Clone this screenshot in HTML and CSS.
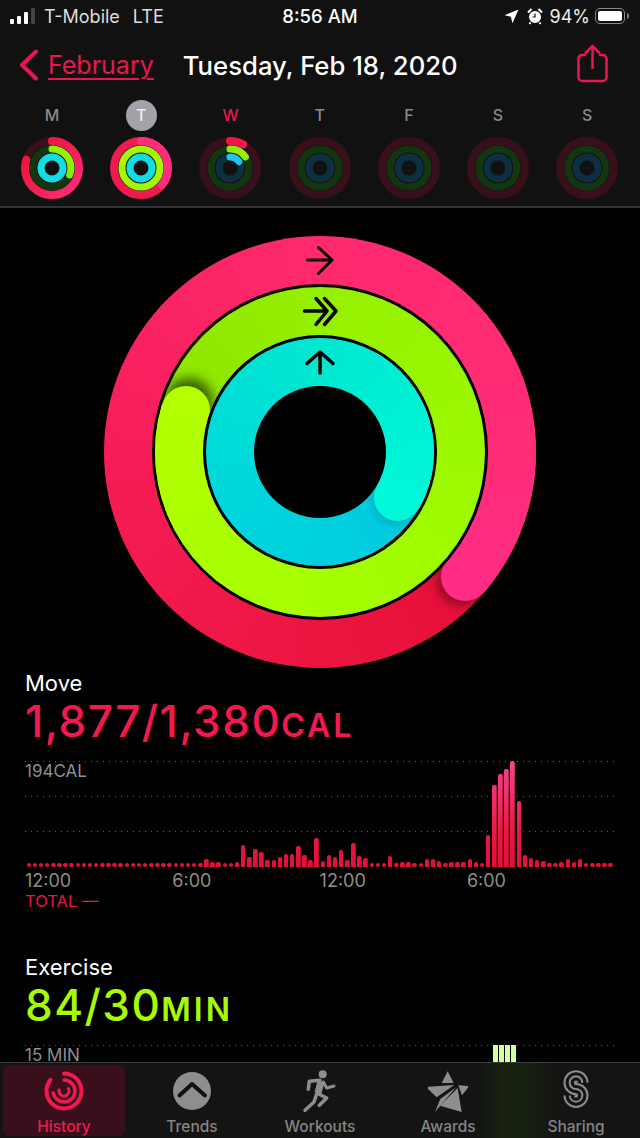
FILE: index.html
```html
<!DOCTYPE html>
<html>
<head lang="en">
    <meta charset="UTF-8">
    <title>Activity</title>
    <meta name="viewport" content="width=device-width,user-scalable=no" />
    <link rel="stylesheet" href="styles.css">
    <script src="chart.js" defer></script>
</head>
<body>
<header class="top">
    <div class="status">
        <div class="status-left">
            <span class="signal"><i></i><i></i><i></i><i></i></span>
            <span class="carrier">T-Mobile</span>
            <span>LTE</span>
        </div>
        <div class="status-time">8:56 AM</div>
        <div class="status-right">
            <svg class="loc" width="15" height="15" viewBox="0 0 15 15"><path d="M.5 6.2 14.5.5 8.5 14.2 6.8 7.8Z" fill="#fff"/></svg>
            <svg class="alarm" width="18" height="18" viewBox="0 0 18 18">
                <circle cx="9" cy="10" r="6" fill="#fff"/>
                <path d="M2 5.5 5.5 2M16 5.5 12.5 2M4.5 15.5 3.5 17M13.5 15.5 14.5 17" stroke="#fff" stroke-width="2" fill="none"/>
                <path d="M9 6.5V10H6.5" stroke="#111" stroke-width="1.2" fill="none"/>
            </svg>
            <span class="percent">94%</span>
            <span class="battery"><i></i></span>
        </div>
    </div>

    <nav class="nav">
        <svg class="back" width="20" height="32" viewBox="0 0 20 32"><path d="M17 2.5 3 16 17 29.5" fill="none" stroke="#e8174f" stroke-width="4" stroke-linecap="round" stroke-linejoin="round"/></svg>
        <a class="month">February</a>
        <h1 class="title">Tuesday, Feb 18, 2020</h1>
        <svg class="share" width="32" height="40" viewBox="0 0 32 40">
            <path d="M10 12H6a3.500 3.500 0 0 0-3.500 3.500v19A3.500 3.500 0 0 0 6 38h21a3.500 3.500 0 0 0 3.500-3.500v-19A3.500 3.500 0 0 0 27 12h-4" fill="none" stroke="#e8174f" stroke-width="2.500"/>
            <path d="M16.500 26V3M9 10.500 16.500 3 24 10.500" fill="none" stroke="#e8174f" stroke-width="2.500"/>
        </svg>
    </nav>

    <svg class="defs" width="0" height="0">
        <defs>
            <linearGradient id="red-arc" x1="1" y1="0" x2="0" y2="1">
                <stop offset="0" stop-color="#e8102f"/>
                <stop offset="1" stop-color="#ff2d78"/>
            </linearGradient>
            <linearGradient id="green-arc" x1="0" y1="0" x2="1" y2="1">
                <stop offset="0" stop-color="#48d818"/>
                <stop offset="1" stop-color="#a4f400"/>
            </linearGradient>
            <symbol id="tracks" viewBox="0 0 62 62">
                <circle class="track-red" cx="31" cy="31" r="27"/>
                <circle class="track-green" cx="31" cy="31" r="19"/>
                <circle class="track-blue" cx="31" cy="31" r="11"/>
            </symbol>
        </defs>
    </svg>

    <div class="week">
        <div class="day">
            <span class="letter">M</span>
            <svg class="mini" viewBox="0 0 62 62">
                <use href="#tracks"/>
                <circle class="arc arc-red" cx="31" cy="31" r="27" pathLength="100" stroke-dasharray="80 100"/>
                <circle class="arc arc-green" cx="31" cy="31" r="19" pathLength="100" stroke-dasharray="31 100"/>
                <circle class="full-blue" cx="31" cy="31" r="11"/>
            </svg>
        </div>
        <div class="day">
            <span class="letter today">T</span>
            <svg class="mini" viewBox="0 0 62 62">
                <circle class="full-red" cx="31" cy="31" r="27"/>
                <circle class="tail-red" cx="31" cy="31" r="27" pathLength="100" stroke-dasharray="36 100"/>
                <circle class="full-green" cx="31" cy="31" r="19"/>
                <circle class="full-blue" cx="31" cy="31" r="11"/>
            </svg>
        </div>
        <div class="day">
            <span class="letter now">W</span>
            <svg class="mini" viewBox="0 0 62 62">
                <use href="#tracks"/>
                <circle class="arc arc-red" cx="31" cy="31" r="27" pathLength="100" stroke-dasharray="8 100"/>
                <circle class="arc arc-green" cx="31" cy="31" r="19" pathLength="100" stroke-dasharray="15 100"/>
                <circle class="arc arc-blue" cx="31" cy="31" r="11" pathLength="100" stroke-dasharray="15 100"/>
            </svg>
        </div>
        <div class="day">
            <span class="letter">T</span>
            <svg class="mini" viewBox="0 0 62 62"><use href="#tracks"/></svg>
        </div>
        <div class="day">
            <span class="letter">F</span>
            <svg class="mini" viewBox="0 0 62 62"><use href="#tracks"/></svg>
        </div>
        <div class="day">
            <span class="letter">S</span>
            <svg class="mini" viewBox="0 0 62 62"><use href="#tracks"/></svg>
        </div>
        <div class="day">
            <span class="letter">S</span>
            <svg class="mini" viewBox="0 0 62 62"><use href="#tracks"/></svg>
        </div>
    </div>
</header>

<main class="content">
    <div class="rings">
        <div class="ring ring-move">
            <span class="cap cap-move"></span>
            <span class="tail tail-move"></span>
            <div class="gap gap-move">
                <div class="ring ring-exercise">
                    <span class="cap cap-exercise"></span>
                    <span class="tail tail-exercise"></span>
                    <div class="gap gap-exercise">
                        <div class="ring ring-stand">
                            <span class="cap cap-stand"></span>
                            <span class="tail tail-stand"></span>
                            <div class="gap hole"></div>
                        </div>
                    </div>
                </div>
            </div>
        </div>
        <svg class="arrows" width="432" height="432" viewBox="0 0 432 432">
            <path d="M203.500 24H228M214.500 11.500 228 24 214.500 37.500" stroke-width="3"/>
            <path d="M200.500 75H222.500M212 62.500 223 75 212 88.500M220.500 62.500 232 75 220.500 88.500" stroke-width="3.500"/>
            <path d="M216 137V116M203 127.500 216 116 229 127.500" stroke-width="3.500"/>
        </svg>
    </div>

    <section class="stat">
        <div class="stat-name">Move</div>
        <div class="stat-value move-value">1,877/1,380<small>CAL</small></div>
        <div class="chart chart-move">
            <div class="grid">
                <div class="grid-line"><span>194CAL</span></div>
                <div class="grid-line"></div>
                <div class="grid-line"></div>
            </div>
            <div class="bars" id="move-bars"></div>
        </div>
        <div class="axis">
            <span>12:00</span>
            <span>6:00</span>
            <span>12:00</span>
            <span>6:00</span>
        </div>
        <div class="total">TOTAL —</div>
    </section>

    <section class="stat stat-exercise">
        <div class="stat-name">Exercise</div>
        <div class="stat-value exercise-value">84/30<small>MIN</small></div>
        <div class="chart chart-exercise">
            <div class="grid">
                <div class="grid-line"><span>15 MIN</span></div>
            </div>
            <div class="bars bars-green">
                <i></i><i></i><i></i><i></i>
            </div>
        </div>
    </section>
</main>

<footer class="tabs">
    <div class="tab active">
        <svg class="tab-icon" viewBox="0 0 40 44">
            <g fill="none" stroke="#f5184f" stroke-linecap="round">
                <circle cx="20" cy="22" r="17.500" stroke-width="4" pathLength="100" stroke-dasharray="86 100" transform="rotate(-90 20 22)"/>
                <circle cx="20" cy="22" r="11" stroke-width="3.500" pathLength="100" stroke-dasharray="72 100" transform="rotate(-90 20 22)"/>
                <circle cx="20" cy="22" r="5" stroke-width="3" pathLength="100" stroke-dasharray="62 100" transform="rotate(-30 20 22)"/>
            </g>
        </svg>
        <span>History</span>
    </div>
    <div class="tab">
        <svg class="tab-icon" viewBox="0 0 40 44">
            <circle cx="20" cy="22" r="19" fill="#8e8e8e"/>
            <path d="M7.500 26.500 20 15 33 26.500" fill="none" stroke="#111" stroke-width="4" stroke-linecap="round" stroke-linejoin="round"/>
        </svg>
        <span>Trends</span>
    </div>
    <div class="tab">
        <svg class="tab-icon" viewBox="0 0 40 44">
            <circle cx="22.700" cy="5.300" r="4" fill="#8e8e8e"/>
            <g fill="none" stroke="#8e8e8e" stroke-linejoin="round" stroke-linecap="round">
                <path d="M21 12.500 18 24" stroke-width="7" stroke-linecap="butt"/>
                <path d="M20 11.300 9.300 12.300 8.300 20.300" stroke-width="3.500"/>
                <path d="M23.300 13 26.700 19 34 17" stroke-width="3"/>
                <path d="M18.300 24.700 26.700 29 19.300 36.300" stroke-width="3.500"/>
                <path d="M16.700 24.700 14 33 5 41.300" stroke-width="3.500"/>
            </g>
        </svg>
        <span>Workouts</span>
    </div>
    <div class="tab">
        <svg class="tab-icon" viewBox="0 0 40 44">
            <g fill="#8e8e8e" transform="translate(-137 -7) scale(.3333)">
                <polygon points="470,28 488,63 452,63"/>
                <polygon points="405,75 490,69 437,106"/>
                <polygon points="432,150 448,111 495,76"/>
                <polygon points="500,78 512,150 447,131"/>
                <polygon points="535,72 502,70 513,100"/>
            </g>
        </svg>
        <span>Awards</span>
    </div>
    <div class="tab">
        <svg class="tab-icon" viewBox="0 0 40 44">
            <g fill="none" stroke="#8e8e8e" stroke-width="2">
                <path d="M31.500 13.700A11.500 11.500 0 1 0 20 25.200A1.200 1.200 0 1 1 18.800 26.400"/>
                <path d="M26.350 13.700A6.350 6.350 0 1 0 20 20.050A6.350 6.350 0 1 1 13.650 26.400"/>
                <path d="M21.200 13.700A1.200 1.200 0 1 0 20 14.900A11.500 11.500 0 1 1 8.500 26.400"/>
            </g>
        </svg>
        <span>Sharing</span>
    </div>
</footer>
</body>
</html>
```

FILE: styles.css
```css
html, body{
    height: 100%;
    padding: 0;
    margin: 0;
    width: 100%;
    overflow: hidden;
    background: #000;
    color: #fff;
    font-family: Inter, "Noto Sans", sans-serif;
}

body{
    display: flex;
    flex-direction: column;
}

/* header */
.top{
    background: #111;
    border-bottom: 2px solid #333;
    height: 206px;
    flex: none;
}

.status{
    display: grid;
    grid-template-columns: 1fr auto 1fr;
    align-items: center;
    height: 32px;
    padding: 0 10px;
    box-sizing: border-box;
    font-size: 18px;
}

.status-left{
    display: flex;
    align-items: center;
    gap: 13px;
    color: #ddd;
}

.signal{
    display: flex;
    align-items: flex-end;
    gap: 3px;
    height: 16px;
    margin-right: -4px;
}

.signal i{
    width: 4px;
    background: #fff;
    border-radius: 1px;
}

.signal i:nth-child(1){ height: 5px; }
.signal i:nth-child(2){ height: 8px; }
.signal i:nth-child(3){ height: 12px; }
.signal i:nth-child(4){ height: 16px; background: #444; }

.status-time{
    font-size: 18.500px;
    font-weight: 500;
}

.status-right{
    display: flex;
    align-items: center;
    justify-content: flex-end;
    gap: 7px;
}

.percent{
    color: #eee;
    margin-left: -1px;
    margin-right: -2px;
}

.battery{
    position: relative;
    width: 30px;
    height: 16px;
    border: 1.500px solid #888;
    border-radius: 5px;
    box-sizing: border-box;
    padding: 2px;
    margin-right: 5px;
    display: flex;
}

.battery:after{
    content: "";
    position: absolute;
    right: -4.500px;
    top: 3.500px;
    width: 2px;
    height: 6px;
    background: #777;
    border-radius: 0 2px 2px 0;
}

.battery i{
    flex: 1;
    background: #fff;
    border-radius: 2px;
}

.nav{
    display: flex;
    align-items: center;
    height: 50px;
    padding-left: 19px;
    margin-top: 8px;
}

.month{
    color: #e8174f;
    font-size: 25px;
    text-decoration: underline;
    text-decoration-thickness: 2px;
    text-underline-offset: 4px;
    margin-left: 9px;
}

.title{
    margin: 0 0 0 29px;
    font-size: 25.700px;
    font-weight: 500;
}

.share{
    margin-left: auto;
    margin-right: 32px;
    margin-top: -4px;
}

.defs{
    position: absolute;
}

.week{
    display: grid;
    grid-template-columns: repeat(7, 89.200px);
    padding: 10px 0 0 7.500px;
}

.day{
    display: flex;
    flex-direction: column;
    align-items: center;
    gap: 6px;
}

.letter{
    width: 31px;
    height: 31px;
    line-height: 31px;
    text-align: center;
    border-radius: 50%;
    color: #8a8a8e;
    font-size: 16px;
    font-weight: 500;
}

.letter.today{
    background: #a2a2a8;
    color: #eee;
}

.letter.now{
    color: #e8174f;
}

.mini{
    width: 62px;
    height: 62px;
    fill: none;
}

.track-red{ stroke: #37101a; stroke-width: 8; fill: none; }
.track-green{ stroke: #133510; stroke-width: 7; fill: none; }
.track-blue{ stroke: #0c3040; stroke-width: 7; fill: none; }

.arc{
    transform: rotate(-90deg);
    transform-origin: 31px 31px;
    stroke-linecap: round;
}

.arc-red{ stroke: url(#red-arc); stroke-width: 8; }
.arc-green{ stroke: url(#green-arc); stroke-width: 7; }
.arc-blue{ stroke: #20c4ec; stroke-width: 7; }

.full-red{ stroke: #ef1a4e; stroke-width: 8; }
.tail-red{
    stroke: #ff2d7c;
    stroke-width: 8;
    stroke-linecap: round;
    transform: rotate(-90deg);
    transform-origin: 31px 31px;
}
.full-green{ stroke: #a2f800; stroke-width: 7; }
.full-blue{ stroke: #14dce4; stroke-width: 7; }

/* big rings */
.content{
    flex: 1;
    overflow: hidden;
    min-height: 0;
}

.rings{
    position: relative;
    width: 432px;
    height: 432px;
    margin: 28px auto 0;
}

.ring, .gap{
    display: flex;
    align-items: center;
    justify-content: center;
    border-radius: 50%;
    position: relative;
    overflow: hidden;
}

.gap{
    background: #000;
}

.ring-move{
    width: 432px;
    height: 432px;
    background: conic-gradient(from 131deg, #e60f38 0deg, #ec1540 49deg, #f61d58 139deg, #ff2a6e 229deg, #ff2c78 319deg, #ff2d85 360deg);
}

.gap-move{
    width: 336px;
    height: 336px;
}

.ring-exercise{
    width: 330px;
    height: 330px;
    background: conic-gradient(from 287deg, #8ee400 0deg, #96f000 73deg, #9cf800 163deg, #a6ff00 253deg, #b0ff00 343deg, #b4ff00 360deg);
}

.gap-exercise{
    width: 234px;
    height: 234px;
}

.ring-stand{
    width: 228px;
    height: 228px;
    background: conic-gradient(from 120deg, #00cbe0 0deg, #00d6dc 120deg, #00e8d0 240deg, #00f8d8 360deg);
}

.hole{
    width: 132px;
    height: 132px;
}

.cap{
    position: absolute;
    border-radius: 50%;
}

/* covers the back half of a cap, so its shadow only falls ahead of it */
.tail{
    position: absolute;
    top: 0;
    left: 0;
    right: 0;
    bottom: 0;
    background: inherit;
}

.tail-move{
    -webkit-mask: conic-gradient(from 131deg, transparent 290deg, #000 290deg);
    mask: conic-gradient(from 131deg, transparent 290deg, #000 290deg);
}

.tail-exercise{
    -webkit-mask: conic-gradient(from 287deg, transparent 290deg, #000 290deg);
    mask: conic-gradient(from 287deg, transparent 290deg, #000 290deg);
}

.tail-stand{
    -webkit-mask: conic-gradient(from 120deg, transparent 270deg, #000 270deg);
    mask: conic-gradient(from 120deg, transparent 270deg, #000 270deg);
}

.cap-move{
    left: 337px;
    top: 317px;
    width: 48px;
    height: 48px;
    background: #ff2d85;
    box-shadow: -4px 5px 10px rgba(0,0,0,.35);
}

.cap-exercise{
    left: 7px;
    top: 99px;
    width: 48px;
    height: 48px;
    background: #b4ff00;
    box-shadow: 3px -8px 12px rgba(0,0,0,.6);
}

.cap-stand{
    left: 168px;
    top: 136px;
    width: 47px;
    height: 47px;
    background: #00f8d8;
    box-shadow: -2px 4px 8px rgba(0,0,0,.15);
}

.arrows{
    position: absolute;
    top: 0;
    left: 0;
    fill: none;
    stroke: #000;
    stroke-linecap: round;
    stroke-linejoin: round;
}

/* stats */
.stat{
    padding: 1px 26px 0 25px;
}

.stat-exercise{
    margin-top: 41px;
}

.stat-name{
    font-size: 22px;
    line-height: 28px;
}

.stat-value{
    font-size: 44px;
    font-weight: 500;
    letter-spacing: 1.500px;
    line-height: 48px;
    white-space: nowrap;
}

.stat-value small{
    font-size: 32px;
    font-weight: 600;
    letter-spacing: 3px;
    line-height: 1;
}

.move-value{
    color: #f5184f;
}

.exercise-value{
    color: #a8fa00;
}

.chart{
    position: relative;
    height: 106px;
    margin-top: 16px;
}

.chart-exercise{
    height: 17px;
}

.grid{
    position: absolute;
    top: 0;
    left: 0;
    right: 0;
}

.grid-line{
    height: 35px;
    background-image: linear-gradient(to right, #666 1px, transparent 1px);
    background-size: 6px 1px;
    background-repeat: repeat-x;
    color: #8e8e8e;
    font-size: 17px;
    line-height: 21px;
}

.bars{
    position: absolute;
    left: 1.500px;
    right: 0;
    bottom: 0;
    display: flex;
    align-items: flex-end;
    justify-content: space-between;
}

.bars i{
    width: 4.500px;
    border-radius: 2px 2px 0 0;
    background: linear-gradient(to top, #e40f36, #e81a42 35%, #f5458f) bottom / 100% 106px no-repeat;
}

.bars i.dot{
    border-radius: 2px;
}

.bars-green{
    left: auto;
    right: 98px;
    width: 23px;
    height: 17px;
}

.bars-green i{
    width: 5px;
    height: 17px;
    border-radius: 0;
    background: #d2ffa0;
}

.axis{
    display: grid;
    grid-template-columns: repeat(4, 147.300px);
    margin-top: 4px;
    color: #8e8e8e;
    font-size: 18px;
    line-height: 20px;
}

.total{
    color: #e8174f;
    font-size: 16.500px;
    line-height: 20px;
}

/* tab bar */
.tabs{
    flex: none;
    height: 76px;
    box-sizing: border-box;
    border-top: 1px solid #3c3c3c;
    background: #141414 linear-gradient(to right, transparent 478px, #182210 505px, #182210 525px, transparent 556px);
    display: grid;
    grid-template-columns: repeat(5, 128px);
    position: relative;
}

.tab{
    margin: 2px 3px 3px;
    padding-top: 4px;
    border-radius: 7px;
    display: flex;
    flex-direction: column;
    align-items: center;
    color: #858585;
    font-size: 15.500px;
    font-weight: 500;
}

.tab.active{
    background: #3a0f1c;
    color: #f5184f;
}

.tab-icon{
    width: 40px;
    height: 44px;
    flex: none;
}

.tab span{
    line-height: 18px;
    margin-top: 5px;
}
```

FILE: chart.js
```js
// calories per 15 minutes, in px of bar height
var MOVE = [
    4,4,4,4,4,4,4,4,4,4,4,4,4,4,4,4,4,4,4,4,4,4,4,4,4,4,4,4,4,
    8,5,5,4,4,5,22,10,18,15,7,7,10,13,13,21,12,7,29,6,12,10,17,7,24,11,9,
    4,4,4,11,4,5,5,4,4,8,8,6,4,5,5,5,8,5,4,
    32,82,93,98,106,66,12,9,7,6,4,4,5,8,5,8,4,4,4,4,4
];

window.addEventListener('DOMContentLoaded', function(){
    var box = document.getElementById('move-bars');
    MOVE.forEach(function(h){
        var bar = document.createElement('i');
        bar.style.height = h + 'px';
        if (h <= 4) bar.className = 'dot';
        box.appendChild(bar);
    });
});
```
